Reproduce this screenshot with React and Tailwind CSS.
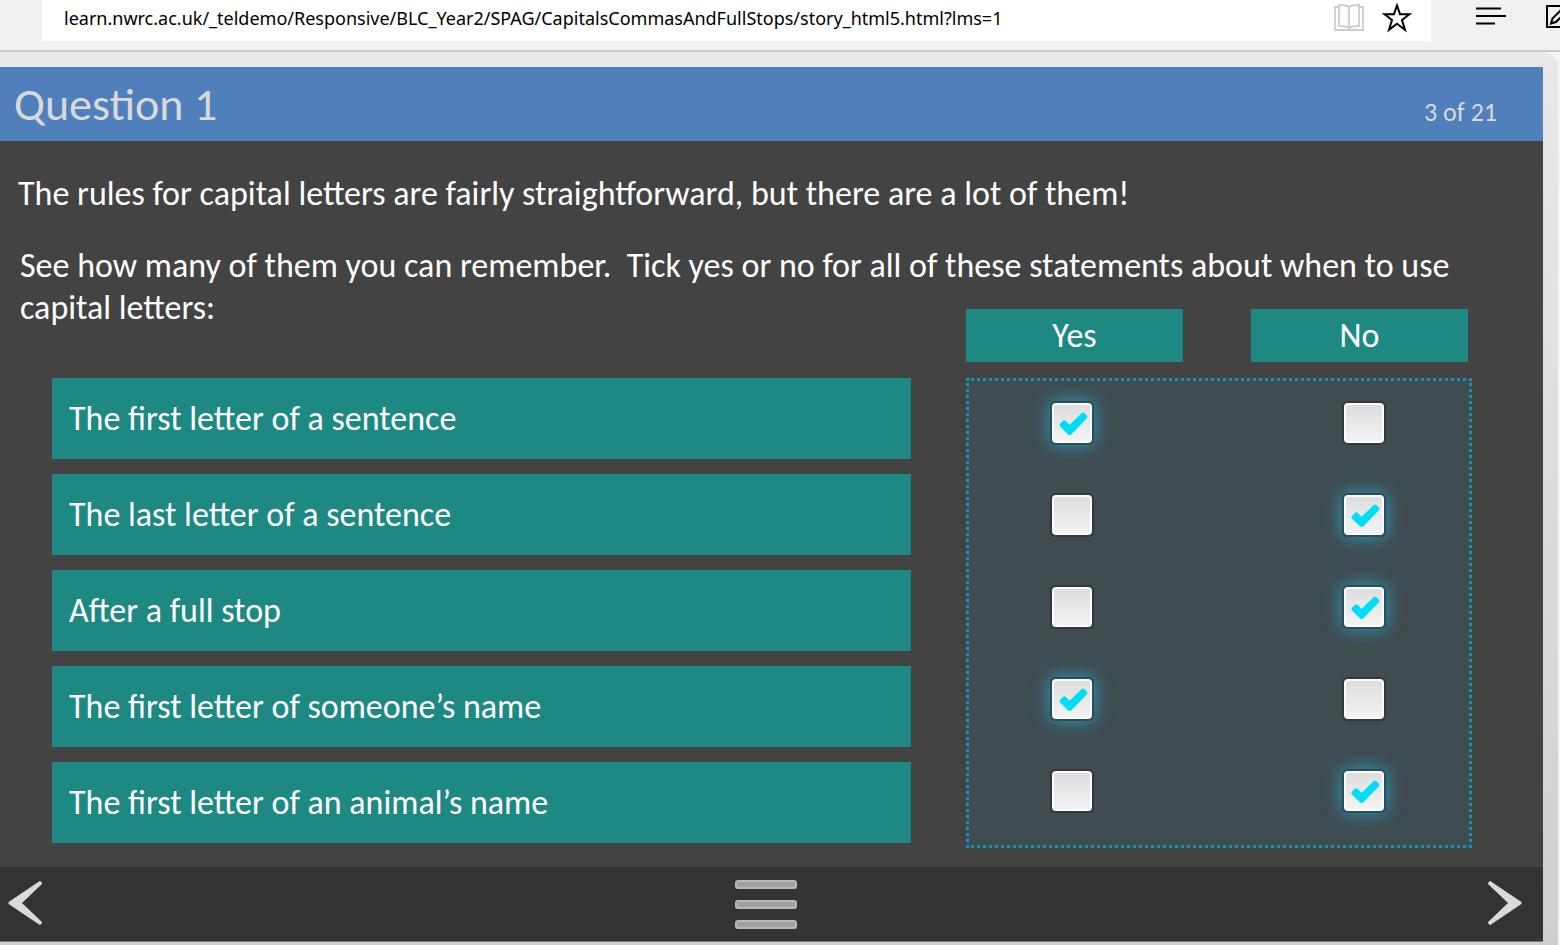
import { useState } from 'react';

const STATEMENTS = [
    { id: 'sentence-first', text: 'The first letter of a sentence', answer: 'yes' },
    { id: 'sentence-last', text: 'The last letter of a sentence', answer: 'no' },
    { id: 'full-stop', text: 'After a full stop', answer: 'no' },
    { id: 'someone', text: 'The first letter of someone’s name', answer: 'yes' },
    { id: 'animal', text: 'The first letter of an animal’s name', answer: 'no' },
];

function TickBox({ checked, onChange, labelledBy }) {
    return (
        <span className="relative block size-11">
            <input
                type="checkbox"
                checked={checked}
                onChange={onChange}
                aria-labelledby={labelledBy}
                className="block size-11 appearance-none rounded-md border-2 border-[#303a3d] bg-linear-to-b from-[#dcdcdc] to-[#f4f4f4] shadow-[inset_0_0_0_2px_#fcfcfc] checked:border-[#254f5c] checked:shadow-[inset_0_0_0_2px_#fcfcfc,0_0_16px_2px_#2f8ba5]"
            />
            {checked && (
                <svg viewBox="0 0 44 44" className="pointer-events-none absolute inset-0 size-11" fill="none" aria-hidden="true">
                    <path
                        d="M10 22.800l3-3q1.300-1 2.600 0l4 4L31.500 12.200q1.500-1.200 3 0l2.200 2.400q1.200 1.400 0 2.800L21.500 33.200q-1.800 1.600-3.600 0L10 25.600q-1.200-1.400 0-2.800z"
                        fill="#00dcf4"
                    />
                </svg>
            )}
        </span>
    );
}

function BrowserBar() {
    return (
        <div className="flex h-[52px] items-start overflow-hidden border-b-2 border-[#cacaca] bg-[#f1f1f1] pl-[42px]">
            <div className="flex h-[41px] flex-1 items-start bg-white pl-[22px] pr-[19px]">
                <input
                    type="text"
                    readOnly
                    aria-label="Address"
                    value="learn.nwrc.ac.uk/_teldemo/Responsive/BLC_Year2/SPAG/CapitalsCommasAndFullStops/story_html5.html?lms=1"
                    className="h-9 min-w-0 flex-1 font-['Noto_Sans','Open_Sans',sans-serif] text-[18px] text-black outline-none"
                />
                <button type="button" aria-label="Reading view" className="mt-1 text-[#cdcdcd]">
                    <svg width="30" height="28" viewBox="0 0 30 28" fill="none" stroke="currentColor" strokeWidth="1.8">
                        <path d="M5 3H1v23h28V3h-4" />
                        <path d="M15 3c-2-2-6-2-10-2v21c4 0 8 0 10 2 2-2 6-2 10-2V1c-4 0-8 0-10 2z" />
                        <path d="M15 3v23" />
                    </svg>
                </button>
                <button type="button" aria-label="Add to favourites" className="ml-[18px] mt-[2px] text-black">
                    <svg width="30" height="31" viewBox="0 0 30 31" fill="none" stroke="currentColor" strokeWidth="2">
                        <path d="M15 3.500l3.100 8.800h9.300l-7.400 5.700 3 9.800-8-6-8 6 3-9.800-7.400-5.700h9.300z" />
                    </svg>
                </button>
            </div>
            <button type="button" aria-label="Hub" className="ml-[45px] mt-1 text-black">
                <svg width="30" height="24" viewBox="0 0 30 24" stroke="currentColor" strokeWidth="2">
                    <path d="M0 4.500h25M0 12h30M0 19.500h19" />
                </svg>
            </button>
            <button type="button" aria-label="Make a note" className="-mr-[10px] ml-10 mt-1 text-black">
                <svg width="24" height="25" viewBox="0 0 24 25" fill="none" stroke="currentColor" strokeWidth="2">
                    <path d="M20 2H1v21h20v-8" />
                    <path d="M5 19.500l1.500-5L18 3l3.500 3.500L10 18z" />
                </svg>
            </button>
        </div>
    );
}

export default function App() {
    const [answers, setAnswers] = useState(() => Object.fromEntries(STATEMENTS.map(s => [s.id, s.answer])));

    const toggle = (id, value) => setAnswers(prev => ({ ...prev, [id]: prev[id] === value ? null : value }));

    return (
        <div className="min-h-screen bg-[#f4f4f4] font-[Carlito,Lato,sans-serif] text-white">
            <BrowserBar />
            <div className="mr-[2px] rounded-tr-2xl bg-linear-to-b from-[#e9e9e9] to-[#cfcfcf] pb-1 pr-[15px] pt-[15px]">
                <header className="flex h-[74px] items-center justify-between bg-[#5080bc] pl-[14px] pr-[46px] text-[#d9d9d9]">
                    <h1 className="text-[46px] leading-[74px]">Question 1</h1>
                    <span className="pt-4 text-[26px]">3 of 21</span>
                </header>

                <main className="bg-[#434343] pb-[19px] pr-[71px] pt-8">
                    <p className="pl-[18px] text-[34px] leading-[42px]">
                        The rules for capital letters are fairly straightforward, but there are a lot of them!
                    </p>
                    <p className="mt-[30px] whitespace-pre-wrap pl-5 text-[34px] leading-[42px]">
                        {'See how many of them you can remember.  Tick yes or no for all of these statements about when to use capital letters:'}
                    </p>

                    <div className="-mt-5 grid grid-cols-[1fr_506px] gap-x-[55px] pl-[52px]">
                        <div className="col-start-2 mb-4 flex gap-[68px] text-center text-[34px] leading-[53px]">
                            <div id="yes" className="w-[217px] bg-[#1d8982]">Yes</div>
                            <div id="no" className="w-[217px] bg-[#1d8982]">No</div>
                        </div>
                        <ul className="col-start-1 flex flex-col gap-[15px]">
                            {STATEMENTS.map(s => (
                                <li key={s.id} id={s.id} className="flex h-[81px] items-center bg-[#1d8982] px-[17px] text-[34px]">
                                    {s.text}
                                </li>
                            ))}
                        </ul>
                        <div className="flex flex-col gap-12 border-[3px] border-dotted border-[#1592b5] bg-[#3f4c50] pb-8 pl-[81px] pr-[83px] pt-5">
                            {STATEMENTS.map(s => (
                                <div key={s.id} className="flex justify-between">
                                    <TickBox checked={answers[s.id] === 'yes'} onChange={() => toggle(s.id, 'yes')} labelledBy={`${s.id} yes`} />
                                    <TickBox checked={answers[s.id] === 'no'} onChange={() => toggle(s.id, 'no')} labelledBy={`${s.id} no`} />
                                </div>
                            ))}
                        </div>
                    </div>
                </main>

                <footer className="flex h-[75px] items-center justify-between border-b border-[#777] bg-[#333] pl-2 pr-5">
                    <button type="button" aria-label="Previous" className="text-[#dadada]">
                        <svg width="35" height="46" viewBox="0 0 35 46" fill="currentColor" stroke="currentColor" strokeWidth="2" strokeLinejoin="round">
                            <path d="M32 1L1.500 21.500v1L32 43l1-1.500L12.500 22 33 2.500z" />
                        </svg>
                    </button>
                    <button type="button" aria-label="Menu" className="flex flex-col gap-[11px]">
                        <span className="h-[9px] w-[62px] rounded-[3px] border-2 border-[#b8b8b8] bg-[#a0a0a0]" />
                        <span className="h-[9px] w-[62px] rounded-[3px] border-2 border-[#b8b8b8] bg-[#a0a0a0]" />
                        <span className="h-[9px] w-[62px] rounded-[3px] border-2 border-[#b8b8b8] bg-[#a0a0a0]" />
                    </button>
                    <button type="button" aria-label="Next" className="text-[#dadada]">
                        <svg width="35" height="46" viewBox="0 0 35 46" fill="currentColor" stroke="currentColor" strokeWidth="2" strokeLinejoin="round">
                            <path d="M2 1L32.500 21.500v1L2 43l-1-1.500L21.500 22 1 2.500z" />
                        </svg>
                    </button>
                </footer>
            </div>
        </div>
    );
}
